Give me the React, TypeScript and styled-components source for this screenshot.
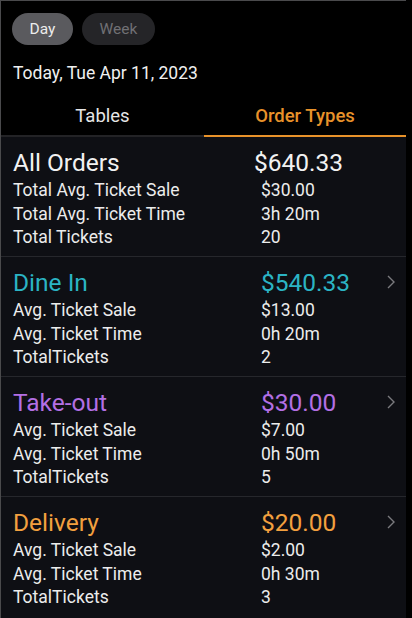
import React from 'react';
import styled, { createGlobalStyle } from 'styled-components';

const GlobalStyle = createGlobalStyle`
    html, body {
        margin: 0;
        padding: 0;
        background: #000;
    }
    body {
        font-family: Roboto, 'Noto Sans', sans-serif;
        -webkit-font-smoothing: antialiased;
    }
`;

type Row = { label: string; value: string };
type Section = {
    title: string;
    total: string;
    color: string;
    rows: Row[];
    chevron?: boolean;
    shiftTotal?: boolean;
};

const sections: Section[] = [
    {
        title: 'All Orders',
        total: '$640.33',
        color: '#f2f2f2',
        shiftTotal: true,
        rows: [
            { label: 'Total Avg. Ticket Sale', value: '$30.00' },
            { label: 'Total Avg. Ticket Time', value: '3h 20m' },
            { label: 'Total Tickets', value: '20' },
        ],
    },
    {
        title: 'Dine In',
        total: '$540.33',
        color: '#2bb4c4',
        chevron: true,
        rows: [
            { label: 'Avg. Ticket Sale', value: '$13.00' },
            { label: 'Avg. Ticket Time', value: '0h 20m' },
            { label: 'TotalTickets', value: '2' },
        ],
    },
    {
        title: 'Take-out',
        total: '$30.00',
        color: '#b36fe4',
        chevron: true,
        rows: [
            { label: 'Avg. Ticket Sale', value: '$7.00' },
            { label: 'Avg. Ticket Time', value: '0h 50m' },
            { label: 'TotalTickets', value: '5' },
        ],
    },
    {
        title: 'Delivery',
        total: '$20.00',
        color: '#f2a03f',
        chevron: true,
        rows: [
            { label: 'Avg. Ticket Sale', value: '$2.00' },
            { label: 'Avg. Ticket Time', value: '0h 30m' },
            { label: 'TotalTickets', value: '3' },
        ],
    },
];

// #region Styles

const Frame = styled.div`
    width: 405px;
    height: 617px;
    border-top: 1px solid #4a4a4c;
    border-left: 1px solid #4a4a4c;
    background: #0e0f14;
    overflow: hidden;
    display: flex;
    flex-direction: column;
`;

const Header = styled.div`
    background: #000;
    padding: 12px 0 0 0;
`;

const PillRow = styled.div`
    display: flex;
    gap: 9px;
    padding: 0 0 0 11px;
`;

const Pill = styled.div<{ $active?: boolean }>`
    height: 32px;
    padding: 0 16px;
    min-width: ${p => (p.$active ? '29px' : '41px')};
    border-radius: 16px;
    display: flex;
    align-items: center;
    justify-content: center;
    font-size: 15.5px;
    background: ${p => (p.$active ? '#5a5a5e' : '#252528')};
    color: ${p => (p.$active ? '#ececec' : '#707074')};
`;

const DateLine = styled.div`
    padding: 17px 0 0 12px;
    height: 22px;
    line-height: 22px;
    font-size: 17.5px;
    color: #f0f0f0;
`;

const Tabs = styled.div`
    display: grid;
    grid-template-columns: 203px 1fr;
    margin-top: 13px;
`;

const Tab = styled.div<{ $active?: boolean }>`
    height: 38px;
    display: flex;
    align-items: center;
    justify-content: center;
    font-size: 18.5px;
    font-weight: ${p => (p.$active ? 500 : 400)};
    color: ${p => (p.$active ? '#e8922a' : '#e6e6e6')};
    border-bottom: 2px solid ${p => (p.$active ? '#e8922a' : '#232326')};
`;

const Block = styled.div<{ $last?: boolean }>`
    padding: 11px 0 6px 12px;
    border-bottom: ${p => (p.$last ? 'none' : '1px solid #26272c')};
`;

const TitleRow = styled.div`
    position: relative;
    display: grid;
    grid-template-columns: 248px 1fr;
    height: 28px;
    margin-bottom: 3px;
    align-items: center;
    font-size: 24.5px;
`;

const TitleText = styled.div<{ $color: string; $shift?: boolean }>`
    color: ${p => p.$color};
    margin-left: ${p => (p.$shift ? '-7px' : '0')};
`;

const Chevron = styled.svg`
    position: absolute;
    right: 10px;
    top: 7px;
`;

const InfoRow = styled.div`
    display: grid;
    grid-template-columns: 248px 1fr;
    height: 23.67px;
    line-height: 23.67px;
    font-size: 17.5px;
    color: #ececec;
`;

// #endregion

export default function App() {
    return (
        <>
            <GlobalStyle />
            <Frame>
                <Header>
                    <PillRow>
                        <Pill $active>Day</Pill>
                        <Pill>Week</Pill>
                    </PillRow>
                    <DateLine>Today, Tue Apr 11, 2023</DateLine>
                    <Tabs>
                        <Tab>Tables</Tab>
                        <Tab $active>Order Types</Tab>
                    </Tabs>
                </Header>
                {sections.map((s, i) => (
                    <Block key={s.title} $last={i === sections.length - 1}>
                        <TitleRow>
                            <TitleText $color={s.color}>{s.title}</TitleText>
                            <TitleText $color={s.color} $shift={s.shiftTotal}>{s.total}</TitleText>
                            {s.chevron ? (
                                <Chevron width="10" height="14" viewBox="0 0 10 14">
                                    <polyline points="2,1 8,7 2,13" fill="none" stroke="#7a7a7e" strokeWidth="1.4" />
                                </Chevron>
                            ) : null}
                        </TitleRow>
                        {s.rows.map(r => (
                            <InfoRow key={r.label}>
                                <div>{r.label}</div>
                                <div>{r.value}</div>
                            </InfoRow>
                        ))}
                    </Block>
                ))}
            </Frame>
        </>
    );
}
